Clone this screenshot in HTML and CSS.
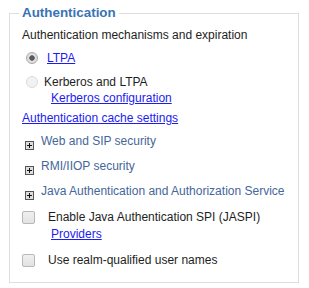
FILE: index.html
```html
<!DOCTYPE html>
<html>
<head>
<meta charset="utf-8">
<link rel="stylesheet" href="styles.css">
</head>
<body>
<fieldset class="panel">
  <legend class="panel-title">Authentication</legend>
  <div class="intro">Authentication mechanisms and expiration</div>
  <div class="option opt-ltpa">
    <input type="radio" class="radio" name="mech" checked>
    <a href="#" class="link link-ltpa">LTPA</a>
  </div>
  <div class="option opt-krb">
    <input type="radio" class="radio" name="mech" disabled>
    <span class="label">Kerberos and LTPA</span>
  </div>
  <div class="sublink"><a href="#" class="link">Kerberos configuration</a></div>
  <div class="cache"><a href="#" class="link">Authentication cache settings</a></div>
  <div class="expander first"><span class="plus"></span><span class="exp-text">Web and SIP security</span></div>
  <div class="expander"><span class="plus"></span><span class="exp-text">RMI/IIOP security</span></div>
  <div class="expander last"><span class="plus"></span><span class="exp-text">Java Authentication and Authorization Service</span></div>
  <div class="check check-jaspi"><input type="checkbox" class="box"><span class="label">Enable Java Authentication SPI (JASPI)</span></div>
  <div class="sublink providers"><a href="#" class="link">Providers</a></div>
  <div class="check check-realm"><input type="checkbox" class="box"><span class="label">Use realm-qualified user names</span></div>
</fieldset>
</body>
</html>
```
FILE: styles.css
```css
html, body {
  margin: 0;
  padding: 0;
  background: #fff;
}
body {
  font-family: "Liberation Sans", Arial, sans-serif;
  font-size: 12px;
  line-height: 16px;
  color: #1e1e1e;
  padding-top: 5px;
}
.panel {
  margin: 0 9px 0 9px;
  width: 290px;
  box-sizing: border-box;
  height: 278px;
  border: 1px solid #dedede;
  padding: 0 0 0 12px;
}
.panel-title {
  margin-left: -3px;
  padding: 0 3px;
  font-size: 13.4px;
  font-weight: bold;
  line-height: 16px;
  color: #3a73b5;
}
.intro {
  margin-top: 6px;
}
.option {
  display: flex;
  align-items: center;
  height: 16px;
}
.opt-ltpa { margin-top: 7px; }
.opt-krb { margin-top: 8px; }
.radio {
  appearance: none;
  -webkit-appearance: none;
  width: 12px;
  height: 12px;
  margin: 0 6px 0 4px;
  border: 1px solid #c4c4c4;
  border-radius: 50%;
  background: #ececec;
  box-sizing: border-box;
  position: relative;
  flex: none;
}
.radio:checked {
  border-color: #a8a8a8;
  background: radial-gradient(circle, #5a5a5a 0, #5a5a5a 2.4px, #dcdcdc 3px, #e9e9e9 100%);
}
.radio:disabled {
  border-color: #dcdcdc;
  background: #f2f2f2;
}
.link {
  color: #1c1cf0;
  text-decoration: underline;
}
.link-ltpa { margin-left: 3px; }
.sublink {
  padding-left: 29px;
}
.cache {
  margin-top: 4px;
}
.expander {
  display: flex;
  align-items: baseline;
  height: 16px;
  margin-top: 9px;
}
.expander.first { margin-top: 7px; }
.expander.last { margin-top: 9px; }
.plus {
  width: 9px;
  height: 9px;
  box-sizing: border-box;
  border: 1px solid #555;
  background:
    linear-gradient(#111, #111) center / 5px 1px no-repeat,
    linear-gradient(#111, #111) center / 1px 5px no-repeat,
    #dedede;
  margin: 0 7px 0 3px;
  position: relative;
  top: 5px;
  flex: none;
}
.exp-text {
  color: #44679a;
}
.check {
  display: flex;
  align-items: center;
  height: 16px;
}
.check-jaspi { margin-top: 10px; }
.check-realm { margin-top: 10px; }
.box {
  appearance: none;
  -webkit-appearance: none;
  width: 13px;
  height: 13px;
  margin: 0 13px 0 0;
  border: 1px solid #b8b8b8;
  border-radius: 2px;
  background: linear-gradient(#f0f0f0, #e2e2e2);
  box-sizing: border-box;
  flex: none;
}
.providers {
  margin-top: 1px;
}
```
